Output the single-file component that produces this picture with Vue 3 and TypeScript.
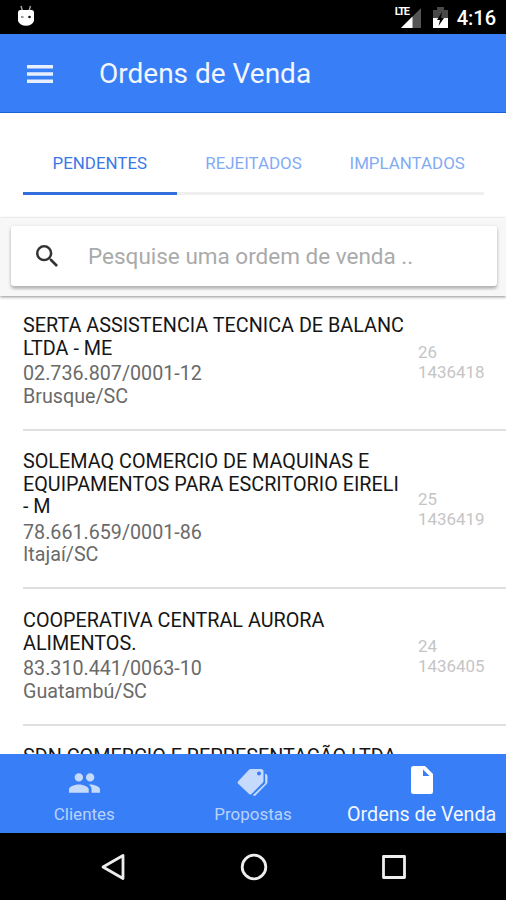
<script setup lang="ts">
interface Order {
  name: string[]
  document: string
  city: string
  sequence: string
  code: string
}

const segments: string[] = ['PENDENTES', 'REJEITADOS', 'IMPLANTADOS']
const selectedSegment = 'PENDENTES'

const orders: Order[] = [
  {
    name: ['SERTA ASSISTENCIA TECNICA DE BALANC', 'LTDA - ME'],
    document: '02.736.807/0001-12',
    city: 'Brusque/SC',
    sequence: '26',
    code: '1436418',
  },
  {
    name: ['SOLEMAQ COMERCIO DE MAQUINAS E', 'EQUIPAMENTOS PARA ESCRITORIO EIRELI', '- M'],
    document: '78.661.659/0001-86',
    city: 'Itajaí/SC',
    sequence: '25',
    code: '1436419',
  },
  {
    name: ['COOPERATIVA CENTRAL AURORA', 'ALIMENTOS.'],
    document: '83.310.441/0063-10',
    city: 'Guatambú/SC',
    sequence: '24',
    code: '1436405',
  },
]
const partialOrder = 'SDN COMERCIO E REPRESENTAÇÃO LTDA'
</script>

<template>
  <div class="screen">
    <div class="status-bar">
      <svg class="robot" width="18" height="22" viewBox="0 0 18 22">
        <path d="M4 1l1.500 5M13.500 1 12 6" stroke="#aaa" stroke-width="1.400" />
        <path d="M1 7.500Q1 5 3.500 5h11Q17 5 17 7.500v8.500Q15 20.800 9 20.800T1 16z" fill="#fff" />
        <path d="M4 12h2.500" stroke="#555" stroke-width="1.200" />
        <circle cx="12.500" cy="12" r="1.300" fill="#111" />
      </svg>
      <div class="status-right">
        <div class="signal">
          <svg width="22" height="20" viewBox="0 0 22 20">
            <path d="M21 0v20H1z" fill="#555" />
            <path d="M12.500 8.500V20H1z" fill="#fff" />
          </svg>
          <span class="lte">LTE</span>
        </div>
        <svg class="battery" width="15" height="22" viewBox="0 0 15 22">
          <path d="M0 3h4V0h7v3h4v9H0z" fill="#484848" />
          <path d="M0 11h15v10H0z" fill="#fff" />
          <path d="M9 5 4 13h3l-1.500 6L11 11H8z" fill="#000" />
        </svg>
        <span class="clock">4:16</span>
      </div>
    </div>

    <header class="toolbar">
      <svg class="menu" width="26" height="18" viewBox="0 0 26 18">
        <path d="M0 1.800h26M0 9h26M0 16.200h26" stroke="#e8f0ff" stroke-width="3.400" />
      </svg>
      <h1>Ordens de Venda</h1>
    </header>

    <nav class="segments">
      <div
        v-for="segment in segments"
        :key="segment"
        class="segment"
        :class="{ active: segment === selectedSegment }"
      >
        <span>{{ segment }}</span>
      </div>
    </nav>

    <div class="search-area">
      <div class="searchbar">
        <svg width="22" height="22" viewBox="3 3 17.500 17.500">
          <path
            fill="#333"
            d="M15.500 14h-.79l-.28-.27A6.471 6.471 0 0 0 16 9.500 6.500 6.500 0 1 0 9.500 16c1.610 0 3.090-.590 4.230-1.570l.27.280v.790l5 4.990L20.490 19l-4.990-5zm-6 0C7.010 14 5 11.990 5 9.500S7.010 5 9.500 5 14 7.010 14 9.500 11.990 14 9.500 14z"
          />
        </svg>
        <span class="placeholder">Pesquise uma ordem de venda ..</span>
      </div>
    </div>

    <main class="orders">
      <article v-for="order in orders" :key="order.code" class="order">
        <div class="details">
          <h2>
            <span v-for="line in order.name" :key="line">{{ line }}</span>
          </h2>
          <p>{{ order.document }}</p>
          <p>{{ order.city }}</p>
        </div>
        <div class="note">
          <span>{{ order.sequence }}</span>
          <span>{{ order.code }}</span>
        </div>
      </article>
      <article class="order">
        <div class="details">
          <h2><span>{{ partialOrder }}</span></h2>
        </div>
      </article>
    </main>

    <footer class="tabs">
      <div class="tab">
        <svg class="people" width="31" height="20" viewBox="1 5 22 14">
          <path
            d="M16 11c1.660 0 2.990-1.340 2.990-3S17.660 5 16 5s-3 1.340-3 3 1.340 3 3 3zm-8 0c1.660 0 2.990-1.340 2.990-3S9.660 5 8 5 5 6.340 5 8s1.340 3 3 3zm0 2c-2.330 0-7 1.170-7 3.500V19h14v-2.500c0-2.330-4.670-3.500-7-3.500zm8 0c-.290 0-.620.020-.970.050 1.160.840 1.970 1.970 1.970 3.450V19h6v-2.500c0-2.330-4.670-3.500-7-3.500z"
          />
        </svg>
        <span>Clientes</span>
      </div>
      <div class="tab">
        <svg class="tags" width="31" height="29" viewBox="0 0 31 29">
          <path
            fill-rule="evenodd"
            d="M13.500 1H24q2.500 0 2.500 2.500V13q0 1-.800 1.800L14.500 26q-1.200 1.200-2.400 0L1.200 15.800Q0 14.500 1.200 13.200L12 1.800Q12.600 1 13.500 1zM22 3.500a2 2 0 1 0 0 4 2 2 0 0 0 0-4z"
          />
          <path d="M28 5.500q2.500.500 2.500 2.500v6q0 1.200-.800 2L18 28l-2.300-.8L27.500 16q.700-.700.700-1.700z" />
        </svg>
        <span>Propostas</span>
      </div>
      <div class="tab active">
        <svg class="document" width="22" height="28" viewBox="0 0 22 28">
          <path
            fill-rule="evenodd"
            d="M2.500 0H14l8 8v17.500Q22 28 19.500 28h-17Q0 28 0 25.500v-23Q0 0 2.500 0zM12 3.500V10h6.500z"
          />
        </svg>
        <span>Ordens de Venda</span>
      </div>
    </footer>

    <div class="system-nav">
      <svg width="26" height="28" viewBox="0 0 26 28">
        <path d="M23 2.500v23L3 14z" />
      </svg>
      <svg width="28" height="28" viewBox="0 0 28 28">
        <circle cx="14" cy="14" r="11.800" />
      </svg>
      <svg width="26" height="26" viewBox="0 0 26 26">
        <rect x="2.500" y="2.500" width="21" height="21" />
      </svg>
    </div>
  </div>
</template>

<style>
body {
  margin: 0;
  background: #fff;
}
</style>

<style scoped>
.screen {
  width: 506px;
  height: 900px;
  display: flex;
  flex-direction: column;
  overflow: hidden;
  background: #fff;
  font-family: Roboto, sans-serif;
}
.status-bar {
  box-sizing: border-box;
  height: 34px;
  flex: none;
  display: flex;
  justify-content: space-between;
  padding: 5px 10px 0 17px;
  background: #000;
}
.status-right {
  display: flex;
  align-items: flex-start;
}
.signal {
  position: relative;
  height: 22px;
  margin: 3px 11px 0 0;
}
.signal svg {
  display: block;
}
.lte {
  position: absolute;
  left: -5px;
  top: -1px;
  padding-right: 1px;
  color: #fff;
  background: #000;
  font-size: 11px;
  line-height: 10px;
  font-weight: 700;
  letter-spacing: -1.2px;
}
.battery {
  margin: 2px 9px 0 0;
}
.clock {
  color: #fff;
  font-size: 20px;
  line-height: 26px;
  font-weight: 500;
}
.toolbar {
  box-sizing: border-box;
  height: 79px;
  flex: none;
  display: flex;
  align-items: center;
  padding: 2px 0 0 27px;
  background: #387ef7;
  border-bottom: 1px solid #1d62d8;
}
h1 {
  margin: 0 0 0 46px;
  color: #f2f6ff;
  font-size: 28px;
  line-height: 40px;
  font-weight: 400;
}
.segments {
  box-sizing: border-box;
  flex: none;
  height: 105px;
  display: grid;
  grid-template-columns: repeat(3, 1fr);
  padding: 0 22px 23px 23px;
}
.segment {
  box-sizing: border-box;
  display: flex;
  justify-content: center;
  align-items: flex-end;
  padding-bottom: 19px;
  border-bottom: 3px solid #efefef;
  color: #82abf5;
  font-size: 16.9px;
  line-height: 20px;
}
.segment.active {
  color: #3b78e7;
  border-color: #326fdd;
}
.search-area {
  box-sizing: border-box;
  flex: none;
  height: 78px;
  padding: 8px 9px 10px 11px;
  background: #f7f7f7;
  box-shadow: 0 1px 3px rgba(0, 0, 0, 0.45);
}
.searchbar {
  height: 60px;
  display: flex;
  align-items: center;
  padding-left: 25px;
  border-radius: 3px;
  background: #fff;
  box-shadow: 0 3px 3px rgba(0, 0, 0, 0.2), 0 1px 4px rgba(0, 0, 0, 0.14);
}
.placeholder {
  margin-left: 30px;
  color: #aaa;
  font-size: 22.5px;
  line-height: 30px;
}
.orders {
  flex: 1;
  min-height: 0;
  overflow: hidden;
}
.order {
  display: flex;
  align-items: center;
  margin-left: 23px;
  border-bottom: 2px solid #e0e0e0;
}
.details {
  width: 395px;
  padding: 20.7px 0 20.3px;
}
.order:first-child .details {
  padding-top: 19.2px;
}
h2 {
  margin: 0 0 3px;
  color: #161616;
  font-size: 19.8px;
  line-height: 22.5px;
  font-weight: 400;
}
h2 span {
  display: block;
  white-space: nowrap;
}
p {
  margin: 0;
  color: #6a6a6a;
  font-size: 19.7px;
  line-height: 22.6px;
}
.note {
  display: flex;
  flex-direction: column;
  color: #c5c5c5;
  font-size: 16.9px;
  line-height: 20px;
}
.tabs {
  flex: none;
  height: 79px;
  display: grid;
  grid-template-columns: repeat(3, 1fr);
  background: #387ef7;
}
.tab {
  display: flex;
  flex-direction: column;
  align-items: center;
  justify-content: flex-end;
  color: #b9d2fc;
  font-size: 17px;
  line-height: 22px;
  padding-bottom: 8px;
  white-space: nowrap;
}
.tab svg {
  fill: #c6dafc;
}
.people {
  margin-bottom: 10px;
}
.tags {
  margin-bottom: 6px;
}
.tab.active {
  padding-bottom: 7px;
  color: #f2f6ff;
  font-size: 19.7px;
}
.tab.active svg {
  fill: #fff;
  margin-bottom: 10px;
}
.system-nav {
  flex: none;
  height: 67px;
  display: flex;
  align-items: center;
  justify-content: space-between;
  box-sizing: border-box;
  padding: 0 99px 0 100px;
  background: #000;
}
.system-nav svg {
  fill: none;
  stroke: #eee;
  stroke-width: 2.800;
  stroke-linejoin: round;
}
</style>
